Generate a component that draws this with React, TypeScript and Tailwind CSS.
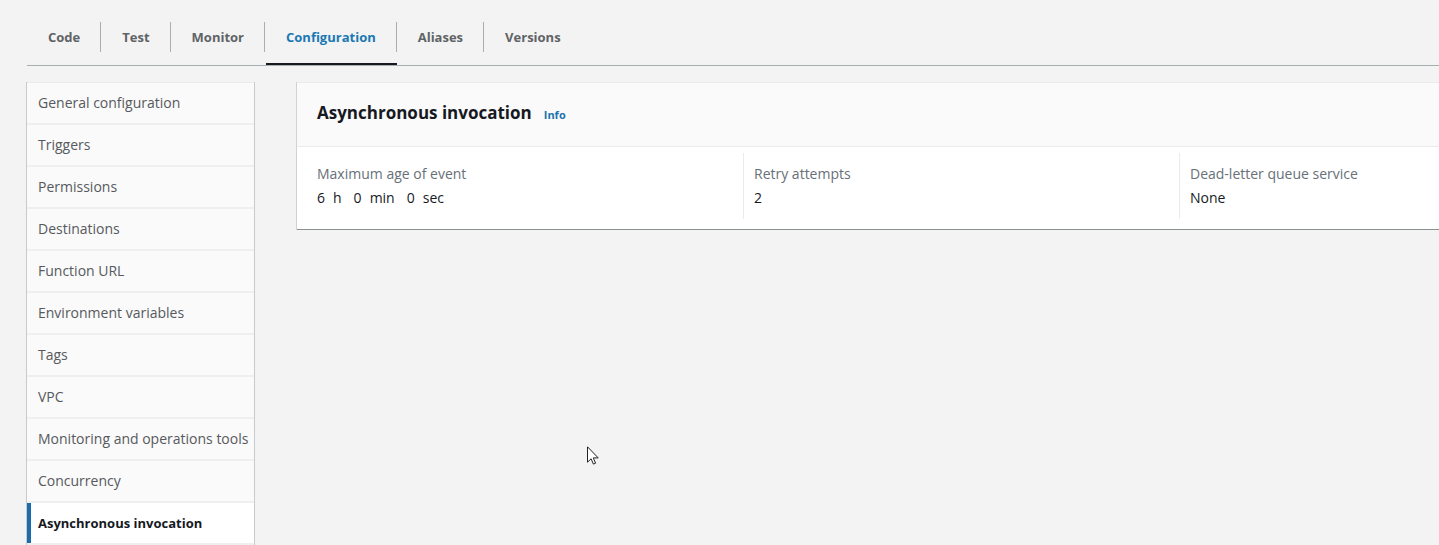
import React, { useState } from "react";
import clsx from "clsx";

const tabs = ["Code", "Test", "Monitor", "Configuration", "Aliases", "Versions"];

const sections = [
  "General configuration",
  "Triggers",
  "Permissions",
  "Destinations",
  "Function URL",
  "Environment variables",
  "Tags",
  "VPC",
  "Monitoring and operations tools",
  "Concurrency",
  "Asynchronous invocation",
];

const settings = [
  { label: "Maximum age of event", value: ["6", "h", "0", "min", "0", "sec"] },
  { label: "Retry attempts", value: ["2"] },
  { label: "Dead-letter queue service", value: ["None"] },
];

function Tabs({ active, onChange }: { active: string; onChange: (tab: string) => void }) {
  return (
    <div role="tablist" className="flex border-b border-[#a9afb0] pt-[22px] text-[13px]">
      {tabs.map((tab, i) => (
        <div key={tab} className="relative pb-[13px]">
          <button
            type="button"
            role="tab"
            aria-selected={tab === active}
            onClick={() => onChange(tab)}
            className={clsx(
              "block h-[30px] pt-[2px] pr-5 pl-[21px] font-bold",
              i < tabs.length - 1 && "border-r border-[#a9afb0]",
              tab === active ? "text-[#1a78b4]" : "text-[#5f6366]"
            )}
          >
            {tab}
          </button>
          {tab === active && (
            <span className="absolute right-0 bottom-0 left-px h-[2px] bg-[#16191f]" />
          )}
        </div>
      ))}
    </div>
  );
}

function SideNav({ active, onChange }: { active: string; onChange: (section: string) => void }) {
  return (
    <nav className="w-[227px] shrink-0 border-t border-[#eaebeb] bg-[#fafafa] shadow-[-1px_0_0_#c8cbcc,1px_0_0_#c8cbcc]">
      <ul>
        {sections.map((section) => (
          <li key={section}>
            <a
              href="#"
              onClick={(e) => {
                e.preventDefault();
                onChange(section);
              }}
              className={clsx(
                "flex h-[42px] items-center border-b-2 border-[#eeefef] pl-[11px] leading-5 whitespace-nowrap",
                section === active
                  ? "bg-white text-[13px] font-bold text-[#16191f] shadow-[inset_4px_0_0_#1b6ca8]"
                  : "text-[#56595d]"
              )}
            >
              {section}
            </a>
          </li>
        ))}
      </ul>
    </nav>
  );
}

function InvocationPanel() {
  return (
    <section className="min-w-0 flex-1 self-start border-y border-t-[#eaebeb] border-b-[#8b9090] bg-white shadow-[-1px_0_0_#d0d3d3]">
      <header className="flex h-[64px] items-baseline gap-3 border-b border-[#eaebeb] bg-[#fafafa] px-5 pt-[18px]">
        <h2 className="text-[17px] leading-6 font-bold text-[#16191f]">Asynchronous invocation</h2>
        <a href="#" className="text-[11px] font-bold text-[#1a73ad]">
          Info
        </a>
      </header>
      <dl className="grid grid-cols-[446fr_436fr_260fr] pt-[6px] pb-[10px]">
        {settings.map((setting, i) => (
          <div
            key={setting.label}
            className={clsx("py-[9px] leading-6", i === 0 ? "pl-5" : "border-l border-[#eaebeb] pl-[10px]")}
          >
            <dt className="text-[#687078]">{setting.label}</dt>
            <dd className="flex gap-2 text-[#16191f]">
              {setting.value.map((part, j) => (
                <span key={j} className={clsx(j > 0 && j % 2 === 0 && "ml-1")}>
                  {part}
                </span>
              ))}
            </dd>
          </div>
        ))}
      </dl>
    </section>
  );
}

export default function App() {
  const [tab, setTab] = useState("Configuration");
  const [section, setSection] = useState("Asynchronous invocation");

  return (
    <div className="relative flex min-h-screen flex-col bg-[#f3f3f3] pl-[27px] font-['Open_Sans','Noto_Sans',sans-serif] text-[14px]">
      <Tabs active={tab} onChange={setTab} />
      <div className="mt-4 flex flex-1 gap-[43px]">
        <SideNav active={section} onChange={setSection} />
        <InvocationPanel />
      </div>

      {/* Mouse pointer */}
      <svg
        className="pointer-events-none absolute top-[446px] left-[587px]"
        width="12"
        height="19"
        viewBox="0 0 12 19"
        aria-hidden="true"
      >
        <path
          d="M.5 .8v15.4l3.6-3.4 2.3 5.3 2.2-.9-2.3-5.3h4.9z"
          fill="#fff"
          stroke="#222"
          strokeWidth="1"
        />
      </svg>
    </div>
  );
}
